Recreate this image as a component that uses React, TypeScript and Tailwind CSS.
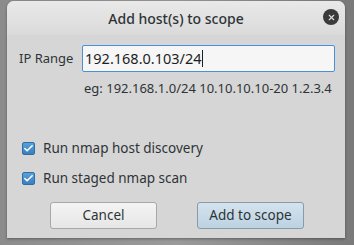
import { Check, X } from "lucide-react";

function CheckRow({ label }: { label: string }) {
  return (
    <label className="flex items-center gap-[8px] h-[20px]">
      <span className="flex items-center justify-center w-[13px] h-[13px] rounded-[2px] border border-[#2f6ea5] bg-gradient-to-b from-[#5aa0d8] to-[#3a7fc0]">
        <Check className="w-[11px] h-[11px] text-white" strokeWidth={3.5} />
      </span>
      <span className="text-[13.5px] text-[#2e3436]">{label}</span>
    </label>
  );
}

export default function App() {
  return (
    <div
      className="w-[354px] h-[245px] bg-gradient-to-r from-[#8c8c8c] via-[#9a9a9a] to-[#7a7a7a] pl-[7px] pt-[1px]"
      style={{ fontFamily: '"Noto Sans", sans-serif' }}
    >
      <div className="w-[338px] h-[237px] rounded-t-[7px] bg-[#d6d6d6] flex flex-col shadow-[0_1px_3px_rgba(0,0,0,0.35)]">
        <div className="relative h-[34px] shrink-0 rounded-t-[7px] bg-gradient-to-b from-[#e9e9e9] to-[#dadada] flex items-center justify-center">
          <span className="text-[14px] font-medium text-[#2e3436]">Add host(s) to scope</span>
          <span className="absolute right-[6px] top-[8px] w-[16px] h-[16px] rounded-full bg-[#3a3a3a] flex items-center justify-center">
            <X className="w-[9px] h-[9px] text-[#e0e0e0]" strokeWidth={3} />
          </span>
        </div>
        <div className="flex items-center pl-[12px] mt-[10px]">
          <span className="text-[13px] text-[#2e3436] w-[63px]">IP Range</span>
          <div className="w-[253px] h-[27px] border border-[#4a90d9] rounded-[2px] bg-[#f6f6f6] flex items-center px-[2px]">
            <span className="text-[14.5px] text-[#1e1e1e]">192.168.0.103/24</span>
            <span className="w-[1px] h-[17px] bg-[#1e1e1e]" />
          </div>
        </div>
        <div className="pl-[77px] mt-[7px] text-[13px] leading-[18px] text-[#2e3436]">
          eg: 192.168.1.0/24 10.10.10.10-20 1.2.3.4
        </div>
        <div className="flex flex-col gap-[10px] pl-[15px] mt-[41px]">
          <CheckRow label="Run nmap host discovery" />
          <CheckRow label="Run staged nmap scan" />
        </div>
        <div className="flex gap-[40px] pl-[43px] mt-[14px]">
          <button className="w-[107px] h-[27px] rounded-[3px] border border-[#a8a8a8] bg-gradient-to-b from-[#f4f4f4] to-[#e6e6e6] text-[13.5px] text-[#2e3436]">
            Cancel
          </button>
          <button className="w-[107px] h-[27px] rounded-[3px] border border-[#8c9aa6] bg-gradient-to-b from-[#d4e3ee] to-[#bcd2e2] text-[13.5px] text-[#2e3436]">
            Add to scope
          </button>
        </div>
      </div>
    </div>
  );
}
